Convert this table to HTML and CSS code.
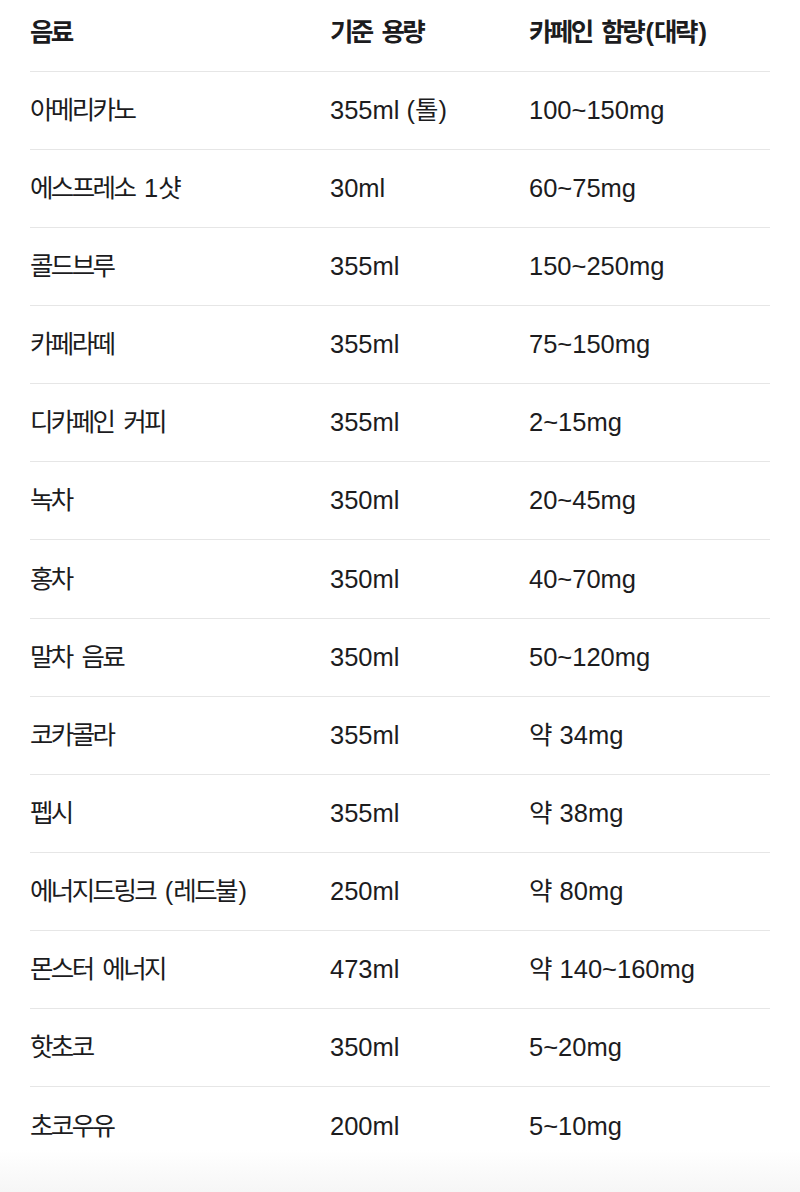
FILE: index.html
```html
<!DOCTYPE html>
<html lang="ko">
<head>
<meta charset="utf-8">
<title>카페인 함량</title>
<link rel="stylesheet" href="styles.css">
</head>
<body>
<div class="page">
<table class="caffeine">
  <thead>
    <tr><th><span class="ko">음료</span></th><th><span class="ko">기준</span> <span class="ko">용량</span></th><th><span class="ko">카페인</span> <span class="ko">함량</span>(<span class="ko">대략</span>)</th></tr>
  </thead>
  <tbody>
    <tr><td><span class="ko">아메리카노</span></td><td>355ml (<span class="ko">톨</span>)</td><td>100~150mg</td></tr>
    <tr><td><span class="ko">에스프레소</span> 1<span class="ko">샷</span></td><td>30ml</td><td>60~75mg</td></tr>
    <tr><td><span class="ko">콜드브루</span></td><td>355ml</td><td>150~250mg</td></tr>
    <tr><td><span class="ko">카페라떼</span></td><td>355ml</td><td>75~150mg</td></tr>
    <tr><td><span class="ko">디카페인</span> <span class="ko">커피</span></td><td>355ml</td><td>2~15mg</td></tr>
    <tr><td><span class="ko">녹차</span></td><td>350ml</td><td>20~45mg</td></tr>
    <tr><td><span class="ko">홍차</span></td><td>350ml</td><td>40~70mg</td></tr>
    <tr><td><span class="ko">말차</span> <span class="ko">음료</span></td><td>350ml</td><td>50~120mg</td></tr>
    <tr><td><span class="ko">코카콜라</span></td><td>355ml</td><td><span class="ko">약</span> 34mg</td></tr>
    <tr><td><span class="ko">펩시</span></td><td>355ml</td><td><span class="ko">약</span> 38mg</td></tr>
    <tr><td><span class="ko">에너지드링크</span> (<span class="ko">레드불</span>)</td><td>250ml</td><td><span class="ko">약</span> 80mg</td></tr>
    <tr><td><span class="ko">몬스터</span> <span class="ko">에너지</span></td><td>473ml</td><td><span class="ko">약</span> 140~160mg</td></tr>
    <tr><td><span class="ko">핫초코</span></td><td>350ml</td><td>5~20mg</td></tr>
    <tr><td><span class="ko">초코우유</span></td><td>200ml</td><td>5~10mg</td></tr>
  </tbody>
</table>
</div>
</body>
</html>
```

FILE: styles.css
```css
html, body {
  margin: 0;
  padding: 0;
}
body {
  width: 800px;
  height: 1192px;
  overflow: hidden;
  background: linear-gradient(to bottom, #ffffff 0, #ffffff 1150px, #f6f6f6 1192px);
  font-family: "Liberation Sans", "Noto Sans CJK KR", sans-serif;
  color: #1c1c1e;
}
.page {
  padding: 0 30px;
}
.caffeine {
  width: 740px;
  border-collapse: collapse;
  table-layout: fixed;
  font-size: 25.5px;
}
.caffeine th,
.caffeine td {
  padding: 0;
  text-align: left;
  white-space: nowrap;
  border-bottom: 1px solid #e6e6e6;
}
.caffeine th:nth-child(1) { width: 300px; }
.caffeine th:nth-child(2) { width: 199px; }
.caffeine th {
  font-weight: 700;
  height: 71px;
  line-height: 64px;
  padding-bottom: 7px;
  box-sizing: border-box;
}
.caffeine td {
  height: 77px;
  line-height: 77px;
}
.caffeine tbody tr:nth-child(7n) td {
  height: 78px;
}
.caffeine tbody tr:last-child td {
  border-bottom: none;
}
.ko {
  letter-spacing: -2.6px;
  margin-right: 2.6px;
}
```
